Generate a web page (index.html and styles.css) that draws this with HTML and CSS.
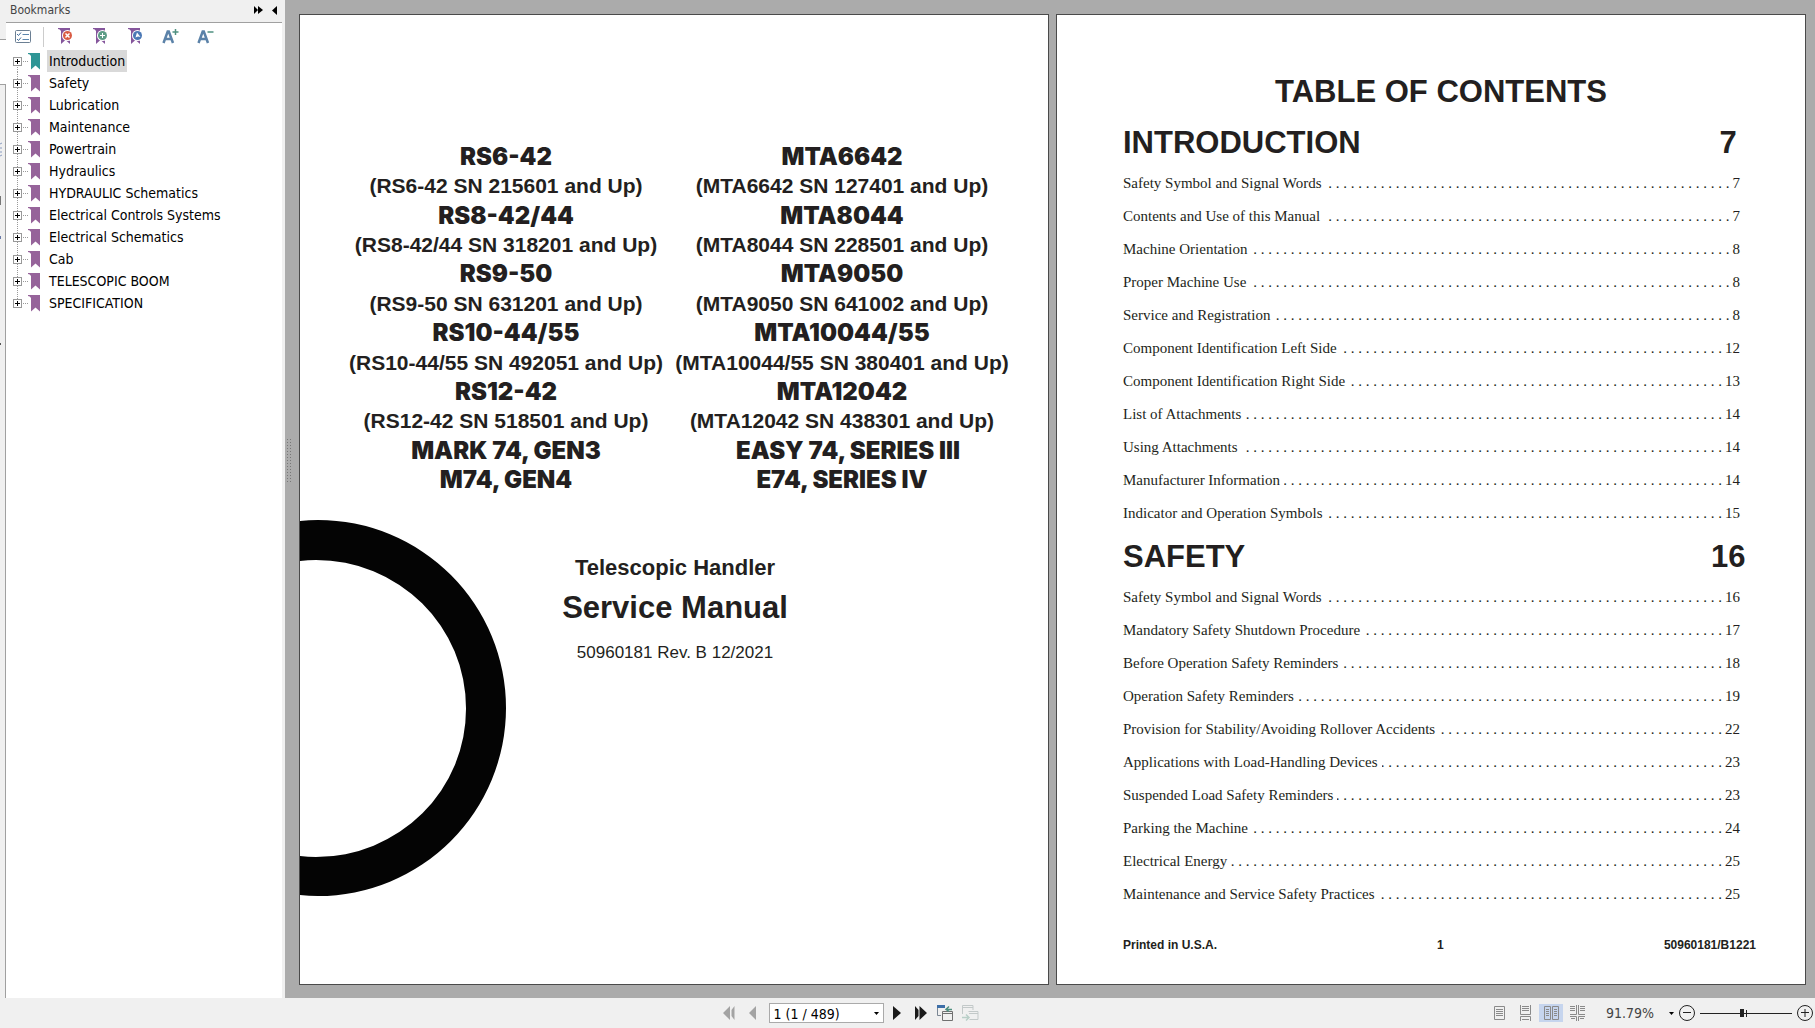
FILE: index.html
```html
<!DOCTYPE html>
<html lang="en">
<head>
    <meta charset="UTF-8">
    <title>Service Manual</title>
    <link rel="stylesheet" href="styles.css">
</head>
<body>
    <svg class="defs" aria-hidden="true">
        <symbol id="mark" viewBox="0 0 13 17">
            <path d="M0 0H12V16.500L7.500 12.500L3 16.500V3Q2 1 0 1Z" fill="currentColor"/>
        </symbol>
        <symbol id="ribbon" viewBox="0 0 16 17">
            <path d="M0 0H12V16L7.500 12L3 16V3Q2 1 0 1Z" fill="#85569c"/>
        </symbol>
    </svg>
    <div class="main">
        <div class="strip">
            <div class="strip-top"></div>
            <div class="strip-tab"></div>
            <div class="strip-rest">
                <svg width="5" height="270" viewBox="0 0 5 270">
                    <path d="M0 59l2-1M0 63h2M0 67h2M0 71l2-1" stroke="#8a9cc0" fill="none"/>
                    <path d="M0 111h1v9H0z" fill="#777"/>
                    <path d="M0 151h1v3H0z" fill="#6a7aa8"/>
                    <path d="M0 258h1v2H0z" fill="#555"/>
                </svg>
            </div>
        </div>
        <div class="panel">
            <div class="panel-head">
                <span>Bookmarks</span>
                <button class="head-btn" aria-label="Expand panel"><svg width="9" height="8" viewBox="0 0 9 8"><path d="M0 0l4 4-4 4zM4 0l5 4-5 4z"/></svg></button>
                <button class="head-btn" aria-label="Collapse panel"><svg width="5" height="9" viewBox="0 0 5 9"><path d="M5 0v9L0 4.500z"/></svg></button>
            </div>
            <div class="panel-body">
                <div class="tools">
                    <button class="tool" aria-label="Options"><svg width="16" height="14" viewBox="0 0 16 14" fill="none"><rect x=".5" y=".5" width="15" height="12" rx="1" stroke="#6b7f93"/><path d="M2 4l1.500 1.500L6 2.500M2 9l1.500 1.500L6 7.500" stroke="#3f6c9c"/><path d="M7.500 4.500H14M7.500 9.500H14" stroke="#5c86ad"/></svg></button>
                    <span class="sep"></span>
                    <button class="tool" aria-label="Delete bookmark"><svg width="16" height="17"><use href="#ribbon"/><circle cx="9.500" cy="7.500" r="5.500" fill="#fff"/><circle cx="9.500" cy="7.500" r="4.500" fill="#d95b43"/><path d="M7.500 5.500l4 4M11.500 5.500l-4 4" stroke="#fff" stroke-width="1.500"/></svg></button>
                    <button class="tool" aria-label="Add bookmark"><svg width="16" height="17"><use href="#ribbon"/><circle cx="9.500" cy="7.500" r="5.500" fill="#fff"/><circle cx="9.500" cy="7.500" r="4.500" fill="#5d9c86"/><path d="M9.500 5v5M7 7.500h5" stroke="#fff"/></svg></button>
                    <button class="tool" aria-label="Find current bookmark"><svg width="16" height="17"><use href="#ribbon"/><circle cx="9.500" cy="7.500" r="5.500" fill="#fff"/><circle cx="9.500" cy="7.500" r="4.500" fill="#4a78b5"/><path d="M9 4.500l3.500 4.500-2.500-.5-2.500 1z" fill="#fff"/></svg></button>
                    <button class="tool" aria-label="Increase text size"><svg width="17" height="17" viewBox="0 0 17 17"><path d="M1.500 15L5.700 3.500h1.100L11 15M3 11h6.500" stroke="#5b82a8" stroke-width="2.500" fill="none"/><path d="M13.500 1v6M10.500 4h6" stroke="#4f9080" stroke-width="1.500"/></svg></button>
                    <button class="tool" aria-label="Decrease text size"><svg width="17" height="17" viewBox="0 0 17 17"><path d="M1.500 15L5.700 3.500h1.100L11 15M3 11h6.500" stroke="#5b82a8" stroke-width="2.500" fill="none"/><path d="M10.500 4h6" stroke="#4f9080" stroke-width="1.500"/></svg></button>
                </div>
                <ul class="tree">
                    <li><button class="plus" aria-label="Expand"></button><svg class="mark on"><use href="#mark"/></svg><a href="#" class="selected">Introduction</a></li>
                    <li><button class="plus" aria-label="Expand"></button><svg class="mark"><use href="#mark"/></svg><a href="#">Safety</a></li>
                    <li><button class="plus" aria-label="Expand"></button><svg class="mark"><use href="#mark"/></svg><a href="#">Lubrication</a></li>
                    <li><button class="plus" aria-label="Expand"></button><svg class="mark"><use href="#mark"/></svg><a href="#">Maintenance</a></li>
                    <li><button class="plus" aria-label="Expand"></button><svg class="mark"><use href="#mark"/></svg><a href="#">Powertrain</a></li>
                    <li><button class="plus" aria-label="Expand"></button><svg class="mark"><use href="#mark"/></svg><a href="#">Hydraulics</a></li>
                    <li><button class="plus" aria-label="Expand"></button><svg class="mark"><use href="#mark"/></svg><a href="#">HYDRAULIC Schematics</a></li>
                    <li><button class="plus" aria-label="Expand"></button><svg class="mark"><use href="#mark"/></svg><a href="#">Electrical Controls Systems</a></li>
                    <li><button class="plus" aria-label="Expand"></button><svg class="mark"><use href="#mark"/></svg><a href="#">Electrical Schematics</a></li>
                    <li><button class="plus" aria-label="Expand"></button><svg class="mark"><use href="#mark"/></svg><a href="#">Cab</a></li>
                    <li><button class="plus" aria-label="Expand"></button><svg class="mark"><use href="#mark"/></svg><a href="#">TELESCOPIC BOOM</a></li>
                    <li><button class="plus" aria-label="Expand"></button><svg class="mark"><use href="#mark"/></svg><a href="#">SPECIFICATION</a></li>
                </ul>
            </div>
        </div>
        <div class="viewer">
            <div class="splitter"><div class="grip"></div></div>
            <div class="page cover">
                <div class="models">
                    <div class="model-list">
                        <h2>RS6-42</h2>
                        <p>(RS6-42 SN 215601 and Up)</p>
                        <h2>RS8-42/44</h2>
                        <p>(RS8-42/44 SN 318201 and Up)</p>
                        <h2>RS9-50</h2>
                        <p>(RS9-50 SN 631201 and Up)</p>
                        <h2>RS10-44/55</h2>
                        <p>(RS10-44/55 SN 492051 and Up)</p>
                        <h2>RS12-42</h2>
                        <p>(RS12-42 SN 518501 and Up)</p>
                        <h2>MARK 74, GEN3</h2>
                        <h2>M74, GEN4</h2>
                    </div>
                    <div class="model-list">
                        <h2>MTA6642</h2>
                        <p>(MTA6642 SN 127401 and Up)</p>
                        <h2>MTA8044</h2>
                        <p>(MTA8044 SN 228501 and Up)</p>
                        <h2>MTA9050</h2>
                        <p>(MTA9050 SN 641002 and Up)</p>
                        <h2>MTA10044/55</h2>
                        <p>(MTA10044/55 SN 380401 and Up)</p>
                        <h2>MTA12042</h2>
                        <p>(MTA12042 SN 438301 and Up)</p>
                        <h2 class="series">EASY 74, SERIES III</h2>
                        <h2>E74, SERIES IV</h2>
                    </div>
                </div>
                <div class="manual">
                    <svg class="ring" width="206" height="376" viewBox="0 0 206 376">
                        <path fill-rule="evenodd" fill="#040404" d="M0 1Q9 0 18 0A188 188 0 0 1 206 188A188 188 0 0 1 18 376Q9 376 0 375ZM0 41V336Q8 337 16 337A150 148 0 0 0 166 188A150 148 0 0 0 16 40Q8 40 0 41Z"/>
                    </svg>
                    <div class="manual-text">
                        <h3>Telescopic Handler</h3>
                        <h1>Service Manual</h1>
                        <p>50960181 Rev. B 12/2021</p>
                    </div>
                </div>
            </div>
            <div class="page toc">
                <h1>TABLE OF CONTENTS</h1>
                <h2><span>INTRODUCTION</span><span class="num">7</span></h2>
                <ul>
                    <li><a href="#">Safety Symbol and Signal Words</a><span class="dots"></span><span>7</span></li>
                    <li><a href="#">Contents and Use of this Manual</a><span class="dots"></span><span>7</span></li>
                    <li><a href="#">Machine Orientation</a><span class="dots"></span><span>8</span></li>
                    <li><a href="#">Proper Machine Use</a><span class="dots"></span><span>8</span></li>
                    <li><a href="#">Service and Registration</a><span class="dots"></span><span>8</span></li>
                    <li><a href="#">Component Identification Left Side</a><span class="dots"></span><span>12</span></li>
                    <li><a href="#">Component Identification Right Side</a><span class="dots"></span><span>13</span></li>
                    <li><a href="#">List of Attachments</a><span class="dots"></span><span>14</span></li>
                    <li><a href="#">Using Attachments</a><span class="dots"></span><span>14</span></li>
                    <li><a href="#">Manufacturer Information</a><span class="dots"></span><span>14</span></li>
                    <li><a href="#">Indicator and Operation Symbols</a><span class="dots"></span><span>15</span></li>
                </ul>
                <h2><span>SAFETY</span><span class="num">16</span></h2>
                <ul>
                    <li><a href="#">Safety Symbol and Signal Words</a><span class="dots"></span><span>16</span></li>
                    <li><a href="#">Mandatory Safety Shutdown Procedure</a><span class="dots"></span><span>17</span></li>
                    <li><a href="#">Before Operation Safety Reminders</a><span class="dots"></span><span>18</span></li>
                    <li><a href="#">Operation Safety Reminders</a><span class="dots"></span><span>19</span></li>
                    <li><a href="#">Provision for Stability/Avoiding Rollover Accidents</a><span class="dots"></span><span>22</span></li>
                    <li><a href="#">Applications with Load-Handling Devices</a><span class="dots"></span><span>23</span></li>
                    <li><a href="#">Suspended Load Safety Reminders</a><span class="dots"></span><span>23</span></li>
                    <li><a href="#">Parking the Machine</a><span class="dots"></span><span>24</span></li>
                    <li><a href="#">Electrical Energy</a><span class="dots"></span><span>25</span></li>
                    <li><a href="#">Maintenance and Service Safety Practices</a><span class="dots"></span><span>25</span></li>
                </ul>
                <div class="foot"><span>Printed in U.S.A.</span><span>1</span><span>50960181/B1221</span></div>
            </div>
        </div>
    </div>
    <div class="status">
        <div class="nav">
            <button class="nav-btn" aria-label="First page" disabled><svg width="14" height="14" viewBox="0 0 14 14" fill="#a3a3a3"><path d="M8 0v14L1 7zM12.500 0v14L9.500 10V4z"/></svg></button>
            <button class="nav-btn" aria-label="Previous page" disabled><svg width="8" height="14" viewBox="0 0 8 14" fill="#a3a3a3"><path d="M7 0v14L0 7z"/></svg></button>
            <label class="pick page-pick">
                <select aria-label="Page"><option>1 (1 / 489)</option></select>
                <svg class="caret" width="5" height="3" viewBox="0 0 5 3"><path d="M0 0h5L2.500 3z"/></svg>
            </label>
            <button class="nav-btn" aria-label="Next page"><svg width="8" height="14" viewBox="0 0 8 14" fill="#1a1a1a"><path d="M0 0v14L8 7z"/></svg></button>
            <button class="nav-btn" aria-label="Last page"><svg width="14" height="14" viewBox="0 0 14 14" fill="#1a1a1a"><path d="M1 0l3.500 4v6L1 14zM5.500 0v14L13 7z"/></svg></button>
            <button class="nav-btn" aria-label="Previous view"><svg width="17" height="16" viewBox="0 0 17 16" fill="none"><path d="M.5 10.500V.5H7M.5 10.500H4" stroke="#7b8794"/><path d="M0 1.500h8" stroke="#3d6fa8" stroke-width="3"/><path d="M5.500 6.500h10v9h-10zM5.500 8.500h10" stroke="#707070"/><path d="M15 4.500H10M12 1.500L9 4.500l3 2" stroke="#4f9080" stroke-width="1.500"/></svg></button>
            <button class="nav-btn" aria-label="Next view" disabled><svg width="17" height="16" viewBox="0 0 17 16" fill="none"><path d="M.5 9V.5H11V5M.5 2.500H11M6.500 6.500h9.500v8H7.500M7 8.500h9" stroke="#c3c9c9"/><path d="M0 12.500h6M4 9.500l3 3-3 3" stroke="#b9cfc8" stroke-width="1.500"/></svg></button>
        </div>
        <div class="views">
            <button class="view" aria-label="Single page"><svg width="11" height="14" viewBox="0 0 11 14"><path d="M.5.5h10v13H.5zM2 3.500h7M2 5.500h7M2 7.500h7M2 9.500h7"/></svg></button>
            <button class="view" aria-label="Continuous"><svg width="11" height="16" viewBox="0 0 11 16"><path d="M.5 0v9.500h10V0M2 1.500h7M2 3.500h7M2 5.500h7M.5 16v-4.500h10V16M2 14.500h7"/></svg></button>
            <button class="view active" aria-label="Facing"><svg width="15" height="14" viewBox="0 0 15 14"><path d="M.5.5h6v13h-6zM8.500.5h6v13h-6zM2 3.500h3M2 5.500h3M2 7.500h3M2 9.500h3M10 3.500h3M10 5.500h3M10 7.500h3M10 9.500h3"/></svg></button>
            <button class="view" aria-label="Continuous facing"><svg width="15" height="16" viewBox="0 0 15 16"><path d="M6.500 0v9.500H0M8.500 0v9.500H15M0 1.500h5M0 3.500h5M0 5.500h5M10 1.500h5M10 3.500h5M10 5.500h5M0 11.500h6.500V16M15 11.500H8.500V16M1 13.500h4M10 13.500h4"/></svg></button>
        </div>
        <label class="pick zoom-pick">
            <select aria-label="Zoom"><option>91.79%</option></select>
            <svg class="caret" width="5" height="3" viewBox="0 0 5 3"><path d="M0 0h5L2.500 3z"/></svg>
        </label>
        <div class="zoom">
            <button class="round" aria-label="Zoom out"><svg width="16" height="16" viewBox="0 0 16 16"><circle cx="8" cy="8" r="7.500"/><path d="M4 7.500h8"/></svg></button>
            <input type="range" min="0" max="100" value="45" aria-label="Zoom level">
            <button class="round" aria-label="Zoom in"><svg width="16" height="16" viewBox="0 0 16 16"><circle cx="8" cy="8" r="7.500"/><path d="M4 7.500h8M8 4v8"/></svg></button>
        </div>
    </div>
</body>
</html>
```
FILE: styles.css
```css
* {
    box-sizing: border-box;
}
body {
    margin: 0;
    height: 100vh;
    display: flex;
    flex-direction: column;
    background-color: #f0f0f0;
    color: #231f20;
    font-family: "Liberation Sans", Arial, sans-serif;
}
h1, h2, h3, p, ul {
    margin: 0;
    padding: 0;
}
ul {
    list-style: none;
}
a {
    color: inherit;
    text-decoration: none;
}
button {
    border: 0;
    padding: 0;
    background: none;
    display: flex;
    align-items: center;
    justify-content: center;
}
.defs {
    display: none;
}
.main {
    flex: 1;
    display: flex;
    min-height: 0;
}

/* left strip */
.strip {
    width: 6px;
    flex: none;
    display: flex;
    flex-direction: column;
}
.strip-top {
    height: 40px;
    border-bottom: 1px solid #a0a0a0;
}
.strip-tab {
    height: 44px;
    background-color: #fff;
}
.strip-rest {
    flex: 1;
    border-top: 1px solid #a0a0a0;
    border-right: 1px solid #a0a0a0;
}

/* bookmarks */
.panel {
    width: 279px;
    flex: none;
    display: flex;
    flex-direction: column;
    font-family: "DejaVu Sans Condensed", "Noto Sans", sans-serif;
}
.panel-head {
    height: 22px;
    display: flex;
    align-items: center;
    gap: 7px;
    padding: 0 6px 2px 4px;
    font-size: 12px;
    color: #444;
}
.panel-head span {
    flex: 1;
}
.head-btn {
    width: 9px;
}
.panel-body {
    flex: 1;
    margin-right: 3px;
    border-top: 1px solid #a0a0a0;
    background-color: #fff;
}
.tools {
    height: 27px;
    display: flex;
    align-items: center;
    gap: 18px;
    padding: 0 8px;
}
.tool {
    width: 17px;
    height: 17px;
}
.sep {
    width: 1px;
    height: 20px;
    margin: 0 -5px 0 -6px;
    background-color: #ccc;
}
.tree {
    padding-left: 7px;
    color: #000;
    font-size: 14px;
}
.tree li {
    height: 22px;
    display: flex;
    align-items: center;
    background: repeating-linear-gradient(#999 0 1px, transparent 1px 2px) 4px 0 / 1px 100% no-repeat, repeating-linear-gradient(90deg, #999 0 1px, transparent 1px 2px) 10px 11px / 5px 1px no-repeat;
}
.tree li:first-child {
    background-position: 4px 11px, 10px 11px;
}
.tree li:last-child {
    background-size: 1px 11px, 5px 1px;
}
.plus {
    width: 9px;
    height: 9px;
    border: 1px solid #999;
    background: linear-gradient(#000, #000) center / 5px 1px no-repeat, linear-gradient(#000, #000) center / 1px 5px no-repeat, #fff;
}
.mark {
    width: 13px;
    height: 17px;
    margin-left: 6px;
    color: #96639a;
}
.mark.on {
    color: #2f9696;
}
.tree a {
    margin-left: 6px;
    padding: 0 2px;
    line-height: 22px;
    white-space: nowrap;
}
.tree .selected {
    background-color: #d9d9d9;
}

/* pages */
.viewer {
    flex: 1;
    min-width: 0;
    display: grid;
    grid-template-columns: 7px minmax(0, 1fr) minmax(0, 1fr);
    gap: 7px;
    padding: 14px 9px 13px 0;
    background-color: #ababab;
}
.splitter {
    padding: 424px 0 0 1px;
}
.grip {
    width: 6px;
    height: 46px;
    background: radial-gradient(circle, #777 0 1px, transparent 1px) 0 0 / 3px 3px;
}
.page {
    border: 1px solid #4a4a4a;
    background-color: #fff;
}
.cover {
    padding-top: 128px;
}
.models {
    display: flex;
    padding: 0 38px;
}
.model-list {
    flex: 1 1 0;
    height: 351px;
    display: flex;
    flex-direction: column;
    justify-content: space-between;
    text-align: center;
    white-space: nowrap;
}
.model-list h2 {
    font-family: Inter, "DejaVu Sans", sans-serif;
    font-size: 24px;
    font-weight: 900;
    line-height: 28px;
}
.model-list p {
    font-size: 21px;
    font-weight: bold;
    line-height: 28px;
}
.model-list .series {
    padding-left: 12px;
}
.manual {
    display: flex;
    margin-top: 26px;
}
.ring {
    flex: none;
}
.manual-text {
    width: 240px;
    margin-left: 49px;
    padding-top: 32px;
    text-align: center;
    white-space: nowrap;
}
.manual-text h3 {
    font-family: "Liberation Sans Narrow", "Liberation Sans", sans-serif;
    font-size: 22px;
    line-height: 32px;
}
.manual-text h1 {
    font-family: "Liberation Sans Narrow", "Liberation Sans", sans-serif;
    font-size: 31px;
    line-height: 48px;
}
.manual-text p {
    font-size: 17px;
    line-height: 42px;
}

/* contents */
.toc {
    padding: 60px 60px 0 66px;
}
.toc h1 {
    margin-bottom: 17px;
    padding-left: 14px;
    font-size: 31px;
    line-height: 34px;
    text-align: center;
}
.toc h2 {
    display: flex;
    justify-content: space-between;
    font-size: 31px;
    line-height: 34px;
}
.toc h2 .num {
    width: 34px;
    text-align: center;
}
.toc ul {
    padding: 7px 5px 10px 0;
    font-family: "Liberation Serif", "Times New Roman", serif;
    font-size: 15px;
}
.toc li {
    display: flex;
    line-height: 33px;
    white-space: nowrap;
}
.dots {
    flex: 1 1 0;
    min-width: 0;
    margin: 0 3px 0 4px;
    overflow: hidden;
    direction: rtl;
}
.dots::before {
    content: ". . . . . . . . . . . . . . . . . . . . . . . . . . . . . . . . . . . . . . . . . . . . . . . . . . . . . . . . . . . . . . . . . . . . . . . . . . . . . .";
}
.foot {
    display: flex;
    justify-content: space-between;
    margin-top: 15px;
    margin-right: -11px;
    font-size: 12px;
    font-weight: bold;
    line-height: 18px;
}

/* status bar */
.status {
    height: 30px;
    display: flex;
    align-items: center;
    padding-right: 2px;
    font-family: "DejaVu Sans Condensed", "Noto Sans", sans-serif;
}
.nav {
    flex: 1;
    display: flex;
    align-items: center;
    justify-content: center;
    gap: 8px;
    padding-left: 212px;
}
.nav-btn {
    min-width: 16px;
    height: 20px;
}
.pick {
    position: relative;
}
.pick select {
    width: 100%;
    height: 100%;
    appearance: none;
    border: 0;
    padding: 0;
    background: none;
    color: inherit;
    font-family: inherit;
    font-size: 14px;
}
.caret {
    position: absolute;
    right: 4px;
    top: 50%;
    margin-top: -1px;
    pointer-events: none;
}
.page-pick {
    width: 115px;
    height: 20px;
    margin-right: -3px;
    border: 1px solid #aaa;
    background-color: #fff;
    color: #000;
}
.page-pick select {
    padding-left: 4px;
}
.views {
    display: flex;
    gap: 2px;
}
.view {
    width: 24px;
    height: 18px;
}
.view svg {
    fill: none;
    stroke: #8a8a8a;
}
.view.active {
    background-color: #c6d5ee;
}
.zoom-pick {
    width: 69px;
    height: 20px;
    margin-left: 17px;
    color: #444;
}
.zoom-pick .caret {
    right: 1px;
}
.zoom {
    display: flex;
    align-items: center;
    gap: 5px;
    margin-left: 4px;
}
.round svg {
    fill: none;
    stroke: #222;
}
.zoom input {
    width: 92px;
    height: 16px;
    margin: 0;
    appearance: none;
    background: linear-gradient(#222, #222) center / 100% 1px no-repeat, linear-gradient(#222, #222) 50% 50% / 1px 7px no-repeat;
}
.zoom input::-webkit-slider-thumb {
    appearance: none;
    width: 4px;
    height: 8px;
    background-color: #222;
}
```
